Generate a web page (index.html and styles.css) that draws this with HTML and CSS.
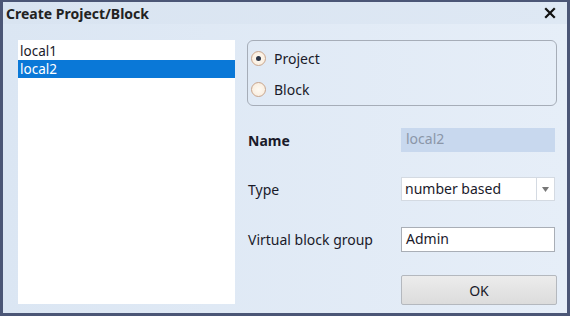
FILE: index.html
```html
<!DOCTYPE html>
<html>
<head>
<meta charset="utf-8">
<link rel="stylesheet" href="styles.css">
</head>
<body>
<div class="window">
  <div class="titlebar">
    <span class="title">Create Project/Block</span>
    <svg class="close" width="12" height="12" viewBox="0 0 12 12"><path d="M2 2 L10 10 M10 2 L2 10" stroke="#111" stroke-width="2.2" stroke-linecap="square"/></svg>
  </div>
  <div class="content">
    <div class="list">
      <div class="item">local1</div>
      <div class="item selected">local2</div>
    </div>
    <div class="form">
      <div class="group">
        <div class="radio-row"><span class="radio checked"></span><span>Project</span></div>
        <div class="radio-row"><span class="radio"></span><span>Block</span></div>
      </div>
      <div class="row name-row">
        <span class="label bold">Name</span>
        <div class="input disabled">local2</div>
      </div>
      <div class="row type-row">
        <span class="label">Type</span>
        <div class="input combo"><span class="combo-text">number based</span><span class="combo-btn"><svg width="7" height="5" viewBox="0 0 7 5"><path d="M0 0 H7 L3.5 5 Z" fill="#777"/></svg></span></div>
      </div>
      <div class="row vbg-row">
        <span class="label">Virtual block group</span>
        <div class="input text">Admin</div>
      </div>
      <div class="row btn-row">
        <button class="ok">OK</button>
      </div>
    </div>
  </div>
</div>
</body>
</html>
```
FILE: styles.css
```css
html, body { margin: 0; padding: 0; }
body { width: 570px; height: 316px; overflow: hidden; font-family: "Noto Sans", "Open Sans", sans-serif; font-size: 14px; color: #1a1a2a; }
.window {
  box-sizing: border-box; width: 570px; height: 316px;
  border: 3px solid #4b5676; border-top-width: 2px;
  background: linear-gradient(90deg, #dbe6f3 0%, #e6eef8 100%);
  display: flex; flex-direction: column;
}
.titlebar {
  height: 23px; display: flex; align-items: center; justify-content: space-between;
  padding: 0 11px 0 3px;
  background: linear-gradient(90deg, #d9e4f1 0%, #dee8f4 100%);
}
.title { font-weight: bold; font-size: 14px; color: #222; }
.close { display: block; }
.content { flex: 1; display: flex; padding: 16px 10px 8px 15px; gap: 12px; }
.list { width: 217px; height: 264px; background: #fff; padding-top: 2px; box-sizing: border-box; font-size: 13.5px; }
.item { height: 18px; line-height: 18px; padding-left: 2px; }
.item.selected { background: #0a78d7; color: #fff; }
.form { flex: 1; display: flex; flex-direction: column; }
.group {
  height: 64px; border: 1px solid #a6adb8; border-radius: 6px;
  display: flex; flex-direction: column; padding: 0 0 0 3px;
}
.radio-row { height: 31px; display: flex; align-items: center; gap: 8px; }
.radio-row:first-child { margin-top: 2px; }
.radio {
  box-sizing: border-box; width: 15px; height: 15px; border-radius: 50%;
  border: 1px solid #c9a58c; background: radial-gradient(circle, #fffaf3 0%, #f7ead9 100%);
  display: flex; align-items: center; justify-content: center;
}
.radio.checked::after { content: ""; width: 5px; height: 5px; border-radius: 50%; background: #2b3548; }
.row { display: flex; align-items: center; }
.label { width: 153px; padding-left: 1px; }
.bold { font-weight: bold; }
.input { box-sizing: border-box; width: 154px; height: 24px; }
.name-row { margin-top: 22px; }
.disabled { background: #c8d8ee; color: #8b96a8; padding: 1px 0 0 5px; }
.type-row { margin-top: 25px; }
.combo { background: #fff; border: 1px solid #d4dae2; display: flex; }
.combo-text { flex: 1; padding: 1px 0 0 3px; }
.combo-btn { width: 17px; border-left: 1px solid #d4dae2; display: flex; align-items: center; justify-content: center; }
.vbg-row { margin-top: 26px; }
.text { height: 25px; background: #fff; border: 1px solid #a9aeb6; padding: 1px 0 0 4px; }
.btn-row { margin-top: 23px; padding-left: 154px; }
.ok {
  box-sizing: border-box; width: 156px; height: 30px; font: inherit; color: #1a1a2a;
  border: 1px solid #b4b8be; border-radius: 2px;
  background: linear-gradient(#ececec, #dcdcdc);
}
```
